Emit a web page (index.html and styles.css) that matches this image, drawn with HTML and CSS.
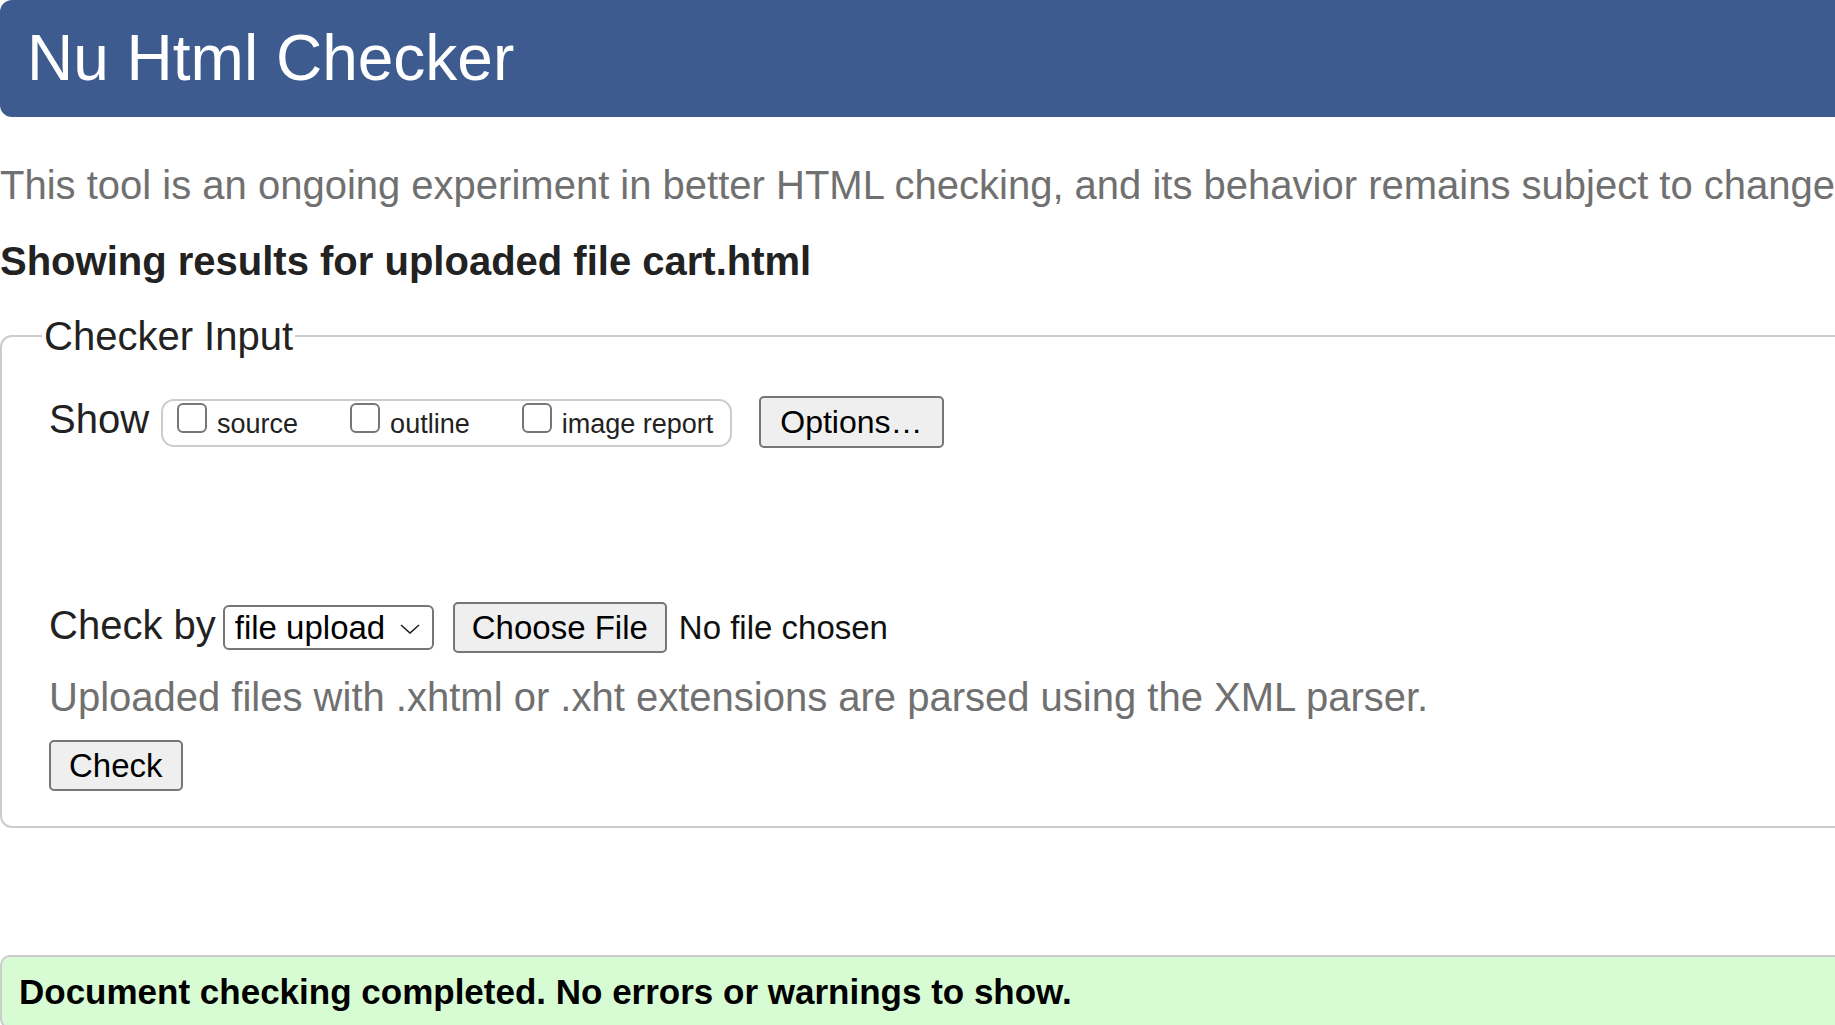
FILE: index.html
```html
<!DOCTYPE html>
<html lang="en">
<head>
<meta charset="utf-8">
<title>Nu Html Checker</title>
<link rel="stylesheet" href="styles.css">
</head>
<body>
<header class="banner">
  <h1 class="title">Nu Html Checker</h1>
</header>
<p class="about">This tool is an ongoing experiment in better HTML checking, and its behavior remains subject to change.</p>
<h2 class="source-title">Showing results for uploaded file cart.html</h2>
<form class="checker">
  <fieldset class="input-set">
    <legend class="legend">Checker Input</legend>
    <div class="row row-show">
      <span class="row-label label-show">Show</span>
      <span class="opts">
        <label class="opt"><input type="checkbox" class="cb"><span class="opt-text">source</span></label>
        <label class="opt"><input type="checkbox" class="cb"><span class="opt-text">outline</span></label>
        <label class="opt"><input type="checkbox" class="cb"><span class="opt-text">image report</span></label>
      </span>
      <button type="button" class="btn btn-options">Options…</button>
    </div>
    <div class="row row-check">
      <span class="row-label label-check">Check by</span>
      <span class="select">
        <select class="sel"><option>file upload</option></select>
        <svg class="chev" width="20" height="10" viewBox="0 0 20 10" aria-hidden="true"><polyline points="1,1 10,9 19,1" fill="none" stroke="#222" stroke-width="1.6"/></svg>
      </span>
      <button type="button" class="btn btn-file">Choose File</button>
      <span class="nofile">No file chosen</span>
    </div>
    <p class="hint">Uploaded files with .xhtml or .xht extensions are parsed using the XML parser.</p>
    <div class="row row-submit">
      <button type="button" class="btn btn-check">Check</button>
    </div>
  </fieldset>
</form>
<p class="success">Document checking completed. No errors or warnings to show.</p>
</body>
</html>
```

FILE: styles.css
```css
html {
  overflow: hidden;
  background: #fff;
}

body {
  margin: 0;
  font-family: "Liberation Sans", Arial, sans-serif;
  color: #222;
}

.banner {
  height: 117px;
  margin-right: -20px;
  background: #3d5b8f;
  border-radius: 12px;
}

.title {
  margin: 0;
  padding-left: 27px;
  font-size: 64px;
  font-weight: normal;
  line-height: 117px;
  color: #fff;
}

.about {
  margin: 45px 0 0;
  font-size: 40px;
  line-height: 46px;
  color: #707070;
  white-space: nowrap;
}

.source-title {
  margin: 30px 0 0;
  font-size: 40px;
  line-height: 46px;
  font-weight: bold;
  color: #222;
  white-space: nowrap;
}

.checker {
  margin: 30px -20px 0 0;
}

.input-set {
  margin: 0;
  padding: 0 0 35px 40px;
  border: 2px solid #ccc;
  border-radius: 12px;
  min-width: 0;
}

.legend {
  padding: 0 2px;
  font-size: 40px;
  line-height: 44px;
  color: #222;
}

.row {
  display: flex;
  align-items: baseline;
  margin-left: 7px;
}

.row-show {
  margin-top: 38px;
}

.row-label {
  font-size: 40px;
  line-height: 46px;
  color: #222;
  white-space: nowrap;
}

.label-show {
  margin-right: 12px;
}

.opts {
  display: inline-flex;
  align-items: baseline;
  gap: 52px;
  padding: 2px 17px 5px 14px;
  border: 2px solid #ccc;
  border-radius: 13px;
  margin-right: 27px;
}

.opt {
  display: flex;
  align-items: baseline;
  gap: 10px;
  font-size: 27px;
  line-height: 31px;
  color: #222;
  white-space: nowrap;
}

.cb {
  appearance: none;
  -webkit-appearance: none;
  box-sizing: border-box;
  width: 30px;
  height: 30px;
  margin: 0;
  border: 2px solid #767676;
  border-radius: 6px;
  background: #fff;
}

.btn {
  font-family: "Liberation Sans", Arial, sans-serif;
  font-size: 33px;
  line-height: 39px;
  color: #000;
  background: #efefef;
  border: 2px solid #767676;
  border-radius: 5px;
  padding: 4px 17px;
  margin: 0;
  white-space: nowrap;
}

.btn-options {
  font-size: 32px;
  line-height: 38px;
  padding: 5px 19px;
}

.btn-check {
  padding: 4px 18px;
}

.row-check {
  margin-top: 154px;
}

.label-check {
  margin-right: 7px;
}

.select {
  display: inline-flex;
  align-items: center;
  box-sizing: border-box;
  width: 211px;
  height: 45px;
  padding-left: 10px;
  border: 2px solid #767676;
  border-radius: 6px;
  margin-right: 19px;
  background: #fff;
}

.sel {
  appearance: none;
  -webkit-appearance: none;
  border: 0;
  padding: 0;
  margin: 0;
  background: transparent;
  font-family: "Liberation Sans", Arial, sans-serif;
  font-size: 33px;
  color: #000;
}

.chev {
  margin-left: 14px;
  margin-top: 2px;
}

.btn-file {
  margin-right: 12px;
}

.nofile {
  font-size: 33px;
  color: #111;
  white-space: nowrap;
}

.hint {
  margin: 21px 0 0 7px;
  font-size: 40px;
  line-height: 46px;
  color: #707070;
  white-space: nowrap;
}

.row-submit {
  margin-top: 20px;
}

.success {
  margin: 127px -20px 0 0;
  padding: 15px 17px;
  border: 2px solid #ccc;
  border-radius: 10px;
  background: #d7fcd4;
  font-size: 35px;
  line-height: 40px;
  font-weight: bold;
  color: #000;
  white-space: nowrap;
}
```
